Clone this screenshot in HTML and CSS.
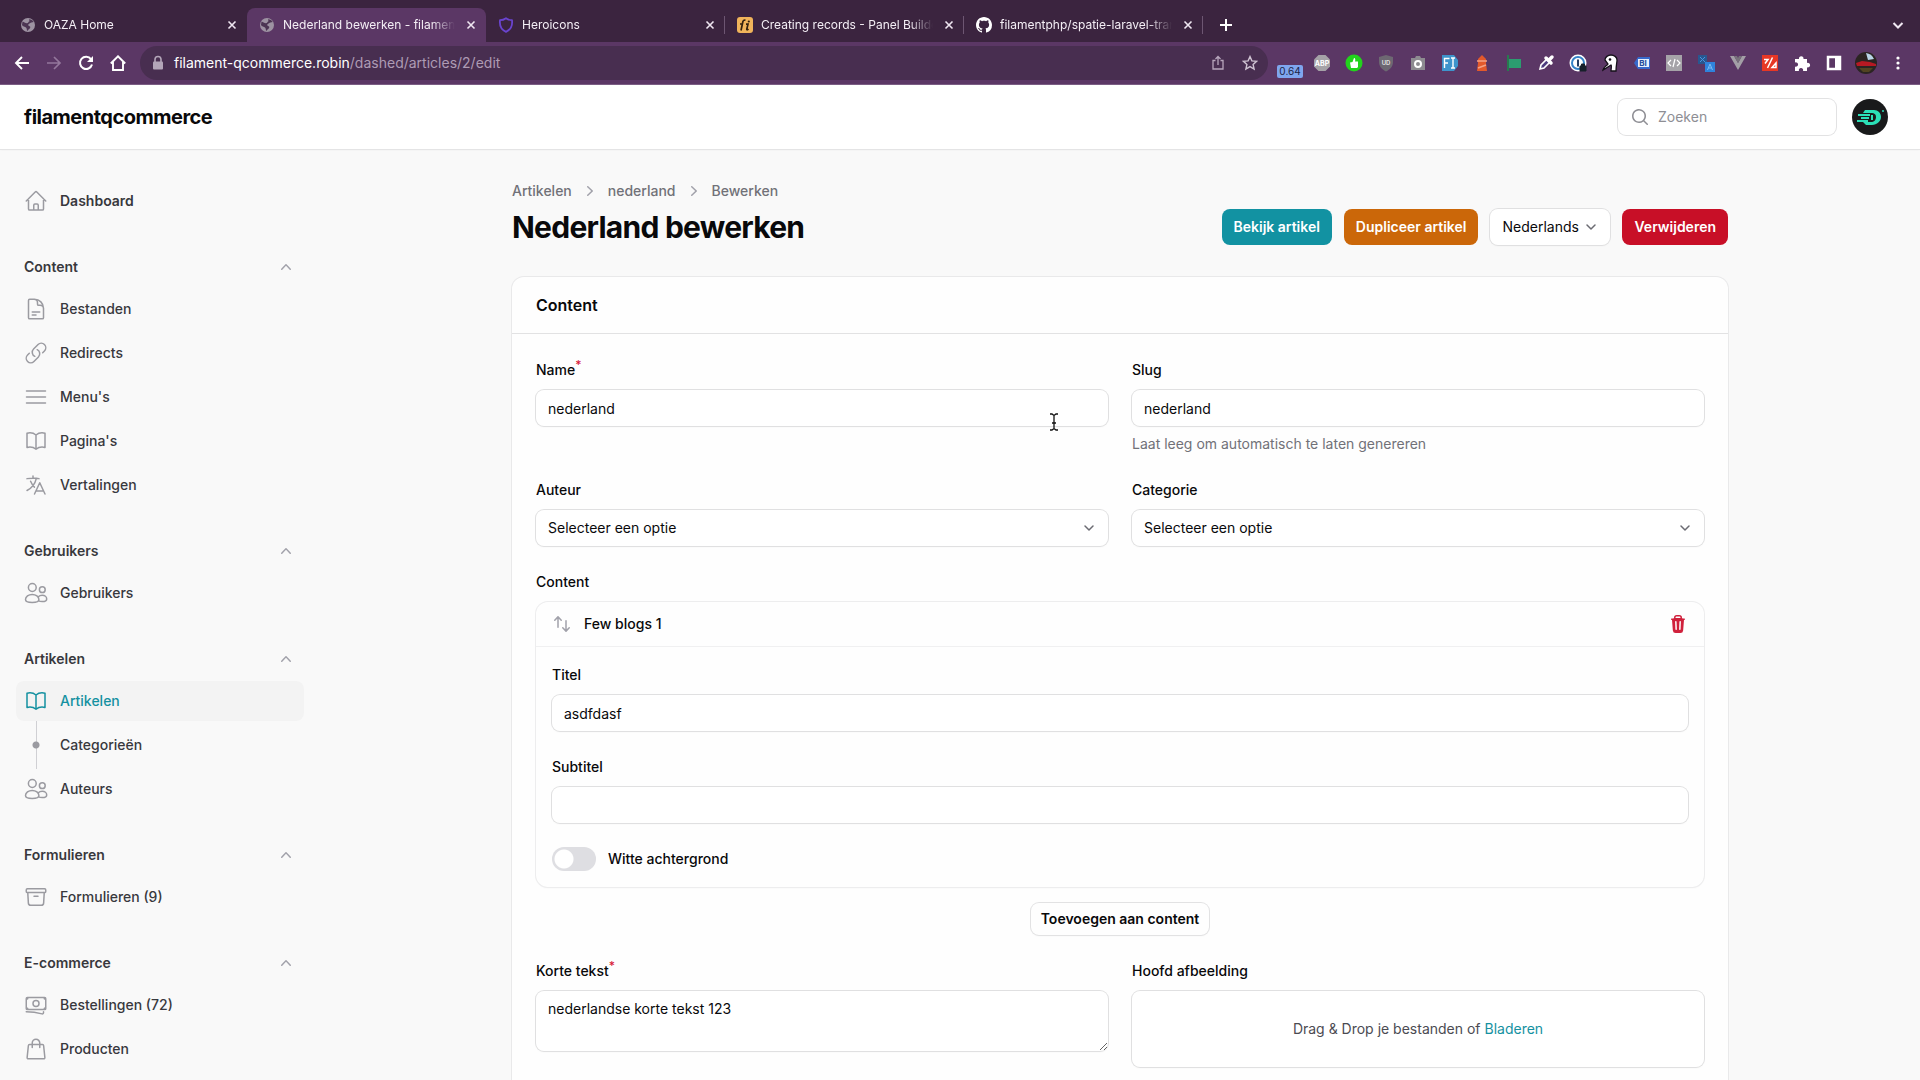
FILE: index.html
```html
<!DOCTYPE html>
<html lang="nl">
<head>
	<meta charset="UTF-8">
	<meta name="viewport" content="width=device-width, initial-scale=1">
	<title>Nederland bewerken - filamentqcommerce</title>
	<link rel="stylesheet" href="styles.css">
</head>
<body>
	<!-- icons used more than once -->
	<svg class="defs" aria-hidden="true">
		<symbol id="i-globe" viewBox="0 0 16 16"><circle cx="8" cy="8" r="7" fill="#9d92a2"/><path d="M2.5 4.5C4 5 5 6 7 6.2c1.500 0 1-1.600 2.500-2L9 2.200c2 0 3.800 1 4.700 2.800-1 .5-2 0-3 .8-1 1-2.500 1-2.500 2.200 0 1 1.500.8 2 1.800.4 1-.6 2-1.700 2.800L7.500 14C6.500 13 7 11.500 6 10.500S2.800 9.500 2 8z" fill="#4c3553"/></symbol>
		<symbol id="i-close" viewBox="0 0 16 16"><path d="M4.500 4.500l7 7m0-7l-7 7" stroke="#efe6f1" stroke-width="1.600" fill="none"/></symbol>
		<symbol id="i-up" viewBox="0 0 20 20"><path fill="currentColor" d="M14.77 12.79a.75.75 0 01-1.06-.02L10 8.832 6.29 12.77a.75.75 0 11-1.08-1.040l4.250-4.500a.75.75 0 011.080 0l4.250 4.500a.75.75 0 01-.02 1.060z"/></symbol>
		<symbol id="i-right" viewBox="0 0 20 20"><path fill="currentColor" d="M7.210 14.770a.75.75 0 01.02-1.060L11.168 10 7.230 6.290a.75.75 0 111.040-1.080l4.500 4.250a.75.75 0 010 1.080l-4.500 4.250a.75.75 0 01-1.060-.02z"/></symbol>
		<symbol id="i-down" viewBox="0 0 20 20"><path d="M6 8l4 4 4-4" fill="none" stroke="currentColor" stroke-width="1.500" stroke-linecap="round" stroke-linejoin="round"/></symbol>
		<symbol id="i-book" viewBox="0 0 24 24"><path d="M12 6.042A8.967 8.967 0 006 3.75c-1.052 0-2.062.18-3 .512v14.25A8.987 8.987 0 016 18c2.305 0 4.408.867 6 2.292m0-14.25a8.966 8.966 0 016-2.292c1.052 0 2.062.18 3 .512v14.25A8.987 8.987 0 0018 18a8.967 8.967 0 00-6 2.292m0-14.25v14.25"/></symbol>
		<symbol id="i-users" viewBox="0 0 24 24"><circle cx="8.300" cy="6.500" r="3.900"/><circle cx="18.300" cy="8.700" r="2.900"/><path d="M1.500 18.500a6.600 5 0 0113.400 0c0 2-2.800 3-6.700 3s-6.700-1-6.700-3zM14.300 15.800c1-1 2.300-1.500 3.900-1.500 2.600 0 4.500 1.700 4.500 3.600s-1.900 2.600-4.500 2.600c-1.400 0-2.700-.2-3.600-.7"/></symbol>
	</svg>

	<div class="window">
		<div class="tabs">
			<div class="tab"><svg class="i16"><use href="#i-globe"/></svg><span>OAZA Home</span><button aria-label="Sluiten"><svg class="i16"><use href="#i-close"/></svg></button></div>
			<div class="tab tab-active"><svg class="i16"><use href="#i-globe"/></svg><span>Nederland bewerken - filamentqcommerce</span><button aria-label="Sluiten"><svg class="i16"><use href="#i-close"/></svg></button></div>
			<div class="tab tab-line"><svg class="i16" viewBox="0 0 16 16"><path d="M8 1.200c2 1.500 4 2 6 2 .6 5-1 9.500-6 11.600-5-2.100-6.600-6.600-6-11.600 2 0 4-.5 6-2z" fill="none" stroke="#6a44cf" stroke-width="1.800" stroke-linejoin="round"/></svg><span>Heroicons</span><button aria-label="Sluiten"><svg class="i16"><use href="#i-close"/></svg></button></div>
			<div class="tab tab-line"><svg class="i16" viewBox="0 0 16 16"><rect width="16" height="16" rx="3" fill="#f0b45b"/><path d="M3 7h3M4 13.500L5.800 5C6 3.500 7 2.800 8.500 3.200M9 7.200h2L9.800 12c-.2 1 .8 1 1.700.2" fill="none" stroke="#33220f" stroke-width="1.700"/><circle cx="11.800" cy="4.500" r="1.100" fill="#33220f"/></svg><span>Creating records - Panel Builder - Filament</span><button aria-label="Sluiten"><svg class="i16"><use href="#i-close"/></svg></button></div>
			<div class="tab tab-line"><svg class="i16" viewBox="0 0 16 16"><path fill="#fff" d="M8 0C3.580 0 0 3.580 0 8c0 3.540 2.290 6.530 5.470 7.590.4.070.55-.17.55-.38 0-.19-.01-.82-.01-1.490-2.010.37-2.530-.49-2.690-.94-.09-.23-.48-.94-.82-1.130-.28-.15-.68-.52-.01-.53.63-.01 1.080.58 1.230.82.72 1.210 1.870.87 2.330.66.07-.52.28-.87.51-1.070-1.780-.2-3.640-.89-3.640-3.950 0-.87.31-1.590.82-2.150-.08-.2-.36-1.020.08-2.120 0 0 .67-.21 2.200.82.64-.18 1.320-.27 2-.27s1.360.09 2 .27c1.530-1.040 2.200-.82 2.200-.82.44 1.100.16 1.920.08 2.120.51.56.82 1.270.82 2.150 0 3.070-1.870 3.750-3.650 3.950.29.25.54.73.54 1.480 0 1.070-.01 1.930-.01 2.200 0 .21.15.46.55.38A8.010 8.010 0 0016 8c0-4.420-3.580-8-8-8z"/></svg><span>filamentphp/spatie-laravel-translatable-plugin</span><button aria-label="Sluiten"><svg class="i16"><use href="#i-close"/></svg></button></div>
			<button class="tab-new" aria-label="Nieuw tabblad"><svg class="i16" viewBox="0 0 16 16"><path d="M8 2v12M2 8h12" stroke="#fff" stroke-width="2"/></svg></button>
			<button class="tab-list" aria-label="Tabbladen zoeken"><svg class="i16" viewBox="0 0 16 16"><path d="M3.500 6L8 10.500 12.500 6" fill="none" stroke="#f0e8f2" stroke-width="2"/></svg></button>
		</div>

		<div class="toolbar">
			<button class="tool" aria-label="Terug"><svg class="i16" viewBox="0 0 16 16"><path d="M15 8H2M8 2L2 8l6 6" fill="none" stroke="#fff" stroke-width="1.900"/></svg></button>
			<button class="tool" aria-label="Vooruit"><svg class="i16" viewBox="0 0 16 16"><path d="M1 8h13M8 2l6 6-6 6" fill="none" stroke="#94779c" stroke-width="1.700"/></svg></button>
			<button class="tool" aria-label="Vernieuwen"><svg class="i16" viewBox="0 0 16 16"><path d="M13 4.200A6.100 6.100 0 1014 9.500" fill="none" stroke="#fff" stroke-width="2"/><path d="M15 1v6H9z" fill="#fff"/></svg></button>
			<button class="tool" aria-label="Startpagina"><svg class="i16" viewBox="0 0 16 16"><path d="M.8 8.500L8 1.300l7.200 7.200M3 7v8h10V7" fill="none" stroke="#fff" stroke-width="1.900"/></svg></button>
			<div class="omnibox">
				<svg class="i16" viewBox="0 0 16 16"><rect x="3" y="6.500" width="10" height="8" rx="1" fill="#b3a5b8"/><path d="M5 7V4.500a3 3 0 016 0V7" fill="none" stroke="#b3a5b8" stroke-width="1.600"/></svg>
				<p class="url">filament-qcommerce.robin<span>/dashed/articles/2/edit</span></p>
				<button class="tool" aria-label="Delen"><svg class="i16" viewBox="0 0 16 16"><path d="M5.500 5.500h-2.500V14h10V5.500h-2.500M8 10V1.500M5.500 4L8 1.500 10.500 4" fill="none" stroke="#b7a6bc" stroke-width="1.300"/></svg></button>
				<button class="tool" aria-label="Bladwijzer"><svg class="i16" viewBox="0 0 16 16"><path d="M8 1.600l1.900 4.300 4.700.4-3.500 3.100 1 4.600L8 11.600 3.900 14l1-4.600-3.500-3.100 4.700-.4z" fill="none" stroke="#cfc3d2" stroke-width="1.400"/></svg></button>
			</div>
			<div class="extensions">
				<span class="tool"><b class="badge">0.64</b></span>
				<span class="tool"><svg class="i18" viewBox="0 0 18 18"><path d="M5.500 1h7L17 5.500v7L12.500 17h-7L1 12.500v-7z" fill="#a5a2a7"/><text x="9" y="11.500" font-size="7" fill="#fff">ABP</text></svg></span>
				<span class="tool"><svg class="i18" viewBox="0 0 18 18"><circle cx="9" cy="9" r="8.500" fill="#22d31c"/><path d="M5 8.500l2.500-.5 1.500-4c1.500 0 1.500 2 1 3.500h3V13l-1 1H6z" fill="#fff"/></svg></span>
				<span class="tool"><svg class="i18" viewBox="0 0 18 18"><path d="M9 1l7 2v5c0 4.500-3 7.500-7 9.500C5 15.500 2 12.500 2 8V3z" fill="#6d6872"/><text x="9" y="11" font-size="6" fill="#ddd">UD</text></svg></span>
				<span class="tool"><svg class="i18" viewBox="0 0 18 18"><path d="M2 4h4l1-2h4l1 2h4v12H2z" fill="#8d8b90"/><circle cx="9" cy="10" r="3" fill="none" stroke="#fff" stroke-width="2"/></svg></span>
				<span class="tool"><svg class="i18" viewBox="0 0 18 18"><path d="M1 1h12l4 5v6l-4 5H1z" fill="#3e94cc"/><path d="M3.500 14V4.500h5M3.500 9H7M10 4h4M12 4v10M10 14h4" fill="none" stroke="#fff" stroke-width="1.400"/></svg></span>
				<span class="tool"><svg class="i18" viewBox="0 0 18 18"><path d="M5 5l4-4 4 4v4l1 8H4l1-8z" fill="#e3592b"/><path d="M4 7h10M5 14l8-3" stroke="#f5a184" stroke-width="1.500"/></svg></span>
				<span class="tool"><svg class="i18" viewBox="0 0 18 18"><path d="M3 1v16" stroke="#28794f" stroke-width="2"/><path d="M4 5h12v9H4z" fill="#2b9d70"/></svg></span>
				<span class="tool"><svg class="i18" viewBox="0 0 18 18"><path d="M3 15l1-4 6-6 3 3-6 6z" fill="#4f3e80" stroke="#fff" stroke-width="1.600"/><path d="M9 4l5 5M12 6l3-3" stroke="#fff" stroke-width="3.500" stroke-linecap="round"/></svg></span>
				<span class="tool"><svg class="i18" viewBox="0 0 18 18"><circle cx="9" cy="9" r="8.500" fill="#fff"/><circle cx="9" cy="9" r="6" fill="#fff" stroke="#3583c7" stroke-width="2"/><path d="M8 5.500h2v7H8z" fill="#243e63"/><path d="M11 12h6v5h-6zM12.500 12v-2h3v2" fill="#17202b" stroke="#17202b"/></svg></span>
				<span class="tool"><svg class="i18" viewBox="0 0 18 18"><path d="M4 6c0-3 3-5 6-5s6 2 6 5-1 5-1 11h-5c0-3 1-5 0-6l-8 5c1-4 4-4 5-6z" fill="#fff" stroke="#151019" stroke-width="1.300"/><circle cx="9" cy="5.500" r="1.300" fill="#151019"/></svg></span>
				<span class="tool"><svg class="i18" viewBox="0 0 18 18"><path d="M1 9l4-6h12v12H5z" fill="#3769ca"/><path d="M5 5h11v8H5z" fill="#e6effb"/><text x="10" y="12" font-size="8" fill="#244d9b">BI</text></svg></span>
				<span class="tool"><svg class="i18" viewBox="0 0 18 18"><path d="M1 1h16v16H1z" fill="#a5a3a8"/><path d="M6 6L3 9l3 3m6-6l3 3-3 3M10 5l-2 8" fill="none" stroke="#fff" stroke-width="1.200"/></svg></span>
				<span class="tool"><svg class="i18" viewBox="0 0 18 18"><path d="M1 1h9v9H1z" fill="#285790"/><path d="M8 8h10v10H8z" fill="#2f83dc"/><path d="M3 3l5 5m0-5L3 8" stroke="#4796e0"/><path d="M10.500 16l2.500-6 2.500 6m-4-2h3" fill="none" stroke="#7dbcf5"/></svg></span>
				<span class="tool"><svg class="i18" viewBox="0 0 18 18"><path d="M1 2h4l4 7 4-7h4L9 16z" fill="#a39fa6"/><path d="M5 2h3l1 2 1-2h3L9 9z" fill="#77717b"/></svg></span>
				<span class="tool"><svg class="i18" viewBox="0 0 18 18"><path d="M1 1h16v16H1z" fill="#e73725"/><path d="M3 5.500h4L4 9.500m7.500-6L6.500 14M11 13.500h4V9z" fill="none" stroke="#fff" stroke-width="1.500"/></svg></span>
				<span class="tool"><svg class="i18" viewBox="0 0 18 18"><path d="M2 5h4a2.300 2.300 0 114.500 0H14v4a2.300 2.300 0 110 4.300V17h-4a2.200 2.200 0 10-4 0H2v-4.500a2.200 2.200 0 100-4z" fill="#fff"/></svg></span>
				<span class="tool"><svg class="i18" viewBox="0 0 18 18"><path d="M3 3h12v12H3z" fill="none" stroke="#fff" stroke-width="2.500"/><path d="M10 3h4v12h-4z" fill="#fff"/></svg></span>
				<span class="tool"><svg class="i22" viewBox="0 0 22 22"><circle cx="11" cy="11" r="11" fill="#2b2422"/><path d="M11 1a10 10 0 018 6l-6 1z" fill="#b9d4e6"/><path d="M1 11l6-2 8 1 6 2v2H2z" fill="#b51923"/><path d="M4 16h14l-4 4H8z" fill="#514421"/></svg></span>
				<span class="tool"><svg class="i18" viewBox="0 0 18 18"><circle cx="9" cy="4" r="1.600" fill="#fff"/><circle cx="9" cy="9" r="1.600" fill="#fff"/><circle cx="9" cy="14" r="1.600" fill="#fff"/></svg></span>
			</div>
		</div>

		<div class="page">
			<header class="topbar">
				<a class="brand" href="#">filamentqcommerce</a>
				<label class="search">
					<svg class="i20" viewBox="0 0 20 20"><path fill="currentColor" d="M9 3.500a5.500 5.500 0 100 11 5.500 5.500 0 000-11zM2 9a7 7 0 1112.452 4.391l3.328 3.329a.75.75 0 11-1.060 1.060l-3.329-3.328A7 7 0 012 9z"/></svg>
					<input type="search" placeholder="Zoeken" aria-label="Zoeken">
				</label>
				<button class="avatar" aria-label="Gebruikersmenu"><svg viewBox="0 0 36 36"><circle cx="18" cy="18" r="18" fill="#191a1b"/><path d="M13 11h9c4 0 7 3 7 7s-4 8-9 8h-6l-3-3h8c3 0 5-2 5-5s-2-4-4-4H11z" fill="#2be0b7"/><path d="M6 16h12M9 19h8M5 22h11M20 16v5" stroke="#2be0b7" stroke-width="2"/><circle cx="31" cy="12" r="1" fill="#2be0b7"/></svg></button>
			</header>

			<div class="layout">
				<nav class="sidebar">
					<ul class="group">
						<li><a class="item item-home" href="#"><svg class="nav-icon" viewBox="0 0 24 24"><path d="M2.250 12l8.954-8.955c.44-.439 1.152-.439 1.591 0L21.750 12M4.500 9.750v10.125c0 .621.504 1.125 1.125 1.125H9.750v-4.875c0-.621.504-1.125 1.125-1.125h2.250c.621 0 1.125.504 1.125 1.125V21h4.125c.621 0 1.125-.504 1.125-1.125V9.750M8.250 21h8.250"/></svg>Dashboard</a></li>
					</ul>
					<div>
						<button class="group-label">Content<svg class="i20"><use href="#i-up"/></svg></button>
						<ul class="group">
							<li><a class="item" href="#"><svg class="nav-icon" viewBox="0 0 24 24"><path d="M19.500 14.250v-2.625a3.375 3.375 0 00-3.375-3.375h-1.500A1.125 1.125 0 0113.500 7.125v-1.500a3.375 3.375 0 00-3.375-3.375H8.250m0 12.750h7.500m-7.500 3H12M10.500 2.250H5.625c-.621 0-1.125.504-1.125 1.125v17.250c0 .621.504 1.125 1.125 1.125h12.750c.621 0 1.125-.504 1.125-1.125V11.250a9 9 0 00-9-9z"/></svg>Bestanden</a></li>
							<li><a class="item" href="#"><svg class="nav-icon" viewBox="0 0 24 24"><path d="M13.190 8.688a4.500 4.500 0 011.242 7.244l-4.500 4.500a4.500 4.500 0 01-6.364-6.364l1.757-1.757m13.350-.622l1.757-1.757a4.500 4.500 0 00-6.364-6.364l-4.500 4.500a4.500 4.500 0 001.242 7.244"/></svg>Redirects</a></li>
							<li><a class="item" href="#"><svg class="nav-icon" viewBox="0 0 24 24"><path d="M2.500 6h19M2.500 12h19M2.500 18h19"/></svg>Menu's</a></li>
							<li><a class="item" href="#"><svg class="nav-icon"><use href="#i-book"/></svg>Pagina's</a></li>
							<li><a class="item" href="#"><svg class="nav-icon" viewBox="0 0 24 24"><path d="M10.500 21l5.250-11.250L21 21m-9-3h7.500M3 5.621a48.474 48.474 0 016-.371m0 0c1.120 0 2.233.038 3.334.114M9 5.250V3m3.334 2.364C11.176 10.658 7.690 15.080 3 17.502m9.334-12.138c.896.061 1.785.147 2.666.257m-4.589 8.495a18.023 18.023 0 01-3.827-5.802"/></svg>Vertalingen</a></li>
						</ul>
					</div>
					<div>
						<button class="group-label">Gebruikers<svg class="i20"><use href="#i-up"/></svg></button>
						<ul class="group">
							<li><a class="item" href="#"><svg class="nav-icon"><use href="#i-users"/></svg>Gebruikers</a></li>
						</ul>
					</div>
					<div>
						<button class="group-label">Artikelen<svg class="i20"><use href="#i-up"/></svg></button>
						<ul class="group">
							<li><a class="item item-active" href="#"><svg class="nav-icon"><use href="#i-book"/></svg>Artikelen</a></li>
							<li><a class="item" href="#"><span class="branch"></span>Categorieën</a></li>
							<li><a class="item" href="#"><svg class="nav-icon"><use href="#i-users"/></svg>Auteurs</a></li>
						</ul>
					</div>
					<div>
						<button class="group-label">Formulieren<svg class="i20"><use href="#i-up"/></svg></button>
						<ul class="group">
							<li><a class="item" href="#"><svg class="nav-icon" viewBox="0 0 24 24"><path d="M20.250 7.500l-.625 10.632a2.250 2.250 0 01-2.247 2.118H6.622a2.250 2.250 0 01-2.247-2.118L3.750 7.500M10 11.250h4M3.375 7.500h17.250c.621 0 1.125-.504 1.125-1.125v-1.500c0-.621-.504-1.125-1.125-1.125H3.375c-.621 0-1.125.504-1.125 1.125v1.500c0 .621.504 1.125 1.125 1.125z"/></svg>Formulieren (9)</a></li>
						</ul>
					</div>
					<div>
						<button class="group-label">E-commerce<svg class="i20"><use href="#i-up"/></svg></button>
						<ul class="group">
							<li><a class="item" href="#"><svg class="nav-icon" viewBox="0 0 24 24"><path d="M2.250 18.750a60.070 60.070 0 0115.797 2.101c.727.198 1.453-.342 1.453-1.096V18.750M3.375 4.500h17.250c.621 0 1.125.504 1.125 1.125v9.750c0 .621-.504 1.125-1.125 1.125H3.375a1.125 1.125 0 01-1.125-1.125v-9.750c0-.621.504-1.125 1.125-1.125zM2.250 6H3a.75.75 0 00.75-.75V4.500m16.500 0v.75c0 .414.336.75.75.75h.75m0 9H21a.75.75 0 00-.75.75v.75m-16.500 0v-.75A.75.75 0 003 15h-.75M15 10.500a3 3 0 11-6 0 3 3 0 016 0z"/></svg>Bestellingen (72)</a></li>
							<li><a class="item" href="#"><svg class="nav-icon" viewBox="0 0 24 24"><path d="M15.750 10.500V6a3.750 3.750 0 10-7.500 0v4.500m11.356-1.993l1.263 12c.07.665-.45 1.243-1.119 1.243H4.250a1.125 1.125 0 01-1.120-1.243l1.264-12A1.125 1.125 0 015.513 7.500h12.974c.576 0 1.059.435 1.119 1.007z"/></svg>Producten</a></li>
						</ul>
					</div>
				</nav>

				<main class="main">
					<div class="heading">
						<div>
							<nav class="breadcrumbs"><a href="#">Artikelen</a><svg class="i20"><use href="#i-right"/></svg><a href="#">nederland</a><svg class="i20"><use href="#i-right"/></svg><a href="#">Bewerken</a></nav>
							<h1>Nederland bewerken</h1>
						</div>
						<div class="actions">
							<button class="btn btn-primary">Bekijk artikel</button>
							<button class="btn btn-warning">Dupliceer artikel</button>
							<span class="select select-small"><select aria-label="Taal"><option>Nederlands</option></select><svg class="i20"><use href="#i-down"/></svg></span>
							<button class="btn btn-danger">Verwijderen</button>
						</div>
					</div>

					<section class="card">
						<h2>Content</h2>
						<form class="fields">
							<div class="field">
								<label for="name">Name<sup>*</sup></label>
								<input class="control" type="text" id="name" value="nederland">
							</div>
							<div class="field">
								<label for="slug">Slug</label>
								<input class="control" type="text" id="slug" value="nederland">
								<p class="hint">Laat leeg om automatisch te laten genereren</p>
							</div>
							<div class="field">
								<label for="author">Auteur</label>
								<span class="select"><select id="author"><option>Selecteer een optie</option></select><svg class="i20"><use href="#i-down"/></svg></span>
							</div>
							<div class="field">
								<label for="category">Categorie</label>
								<span class="select"><select id="category"><option>Selecteer een optie</option></select><svg class="i20"><use href="#i-down"/></svg></span>
							</div>
							<div class="field wide">
								<span class="label">Content</span>
								<div class="block">
									<div class="block-head">
										<svg class="i20 sort" viewBox="0 0 20 20"><path fill="currentColor" d="M2.240 6.800a.75.75 0 001.060-.04l1.950-2.100v8.590a.75.75 0 001.500 0V4.660l1.950 2.100a.75.75 0 101.100-1.020l-3.250-3.500a.75.75 0 00-1.100 0L2.200 5.740a.75.75 0 00.04 1.060zm8 6.400a.75.75 0 00-.04 1.060l3.250 3.500a.75.75 0 001.100 0l3.250-3.500a.75.75 0 10-1.100-1.020l-1.950 2.100V6.750a.75.75 0 00-1.500 0v8.590l-1.950-2.100a.75.75 0 00-1.060-.04z"/></svg>
										<h3>Few blogs 1</h3>
										<button type="button" class="trash" aria-label="Verwijderen"><svg class="i20" viewBox="0 0 20 20"><path fill="currentColor" fill-rule="evenodd" d="M8.750 1A2.750 2.750 0 006 3.750v.443c-.795.077-1.584.176-2.365.298a.75.75 0 10.23 1.482l.149-.022.841 10.518A2.750 2.750 0 007.596 19h4.807a2.750 2.750 0 002.742-2.530l.841-10.520.149.023a.75.75 0 00.23-1.482A41.030 41.030 0 0014 4.193V3.750A2.750 2.750 0 0011.250 1h-2.500zM10 4c.84 0 1.673.025 2.500.075V3.750c0-.69-.56-1.250-1.250-1.250h-2.500c-.69 0-1.250.56-1.250 1.250v.325C8.327 4.025 9.160 4 10 4zM8.580 7.720a.75.75 0 00-1.500.06l.3 7.500a.75.75 0 101.500-.06l-.3-7.500zm4.340.06a.75.75 0 10-1.500-.06l-.3 7.500a.75.75 0 101.500.06l.3-7.500z"/></svg></button>
									</div>
									<div class="block-body">
										<div class="field">
											<label for="title">Titel</label>
											<input class="control" type="text" id="title" value="asdfdasf">
										</div>
										<div class="field">
											<label for="subtitle">Subtitel</label>
											<input class="control" type="text" id="subtitle">
										</div>
										<label class="toggle"><input type="checkbox">Witte achtergrond</label>
									</div>
								</div>
								<button type="button" class="btn btn-add">Toevoegen aan content</button>
							</div>
							<div class="field">
								<label for="excerpt">Korte tekst<sup>*</sup></label>
								<textarea class="control" id="excerpt">nederlandse korte tekst 123</textarea>
							</div>
							<div class="field">
								<span class="label">Hoofd afbeelding</span>
								<div class="dropzone">Drag &amp; Drop je bestanden of&nbsp;<a href="#">Bladeren</a></div>
							</div>
						</form>
					</section>
				</main>
			</div>
		</div>
		<svg class="cursor" viewBox="0 0 10 18"><path d="M1 1h2l2 1.500L7 1h2M1 17h2l2-1.500L7 17h2M5 2v14M3 10h4" fill="none" stroke="#111" stroke-width="1.300"/></svg>
	</div>
</body>
</html>
```
FILE: styles.css
```css
*{
	box-sizing: border-box;
}
body,h1,h2,h3,p,ul{
	margin: 0;
	padding: 0;
}
body{
	font-family: Inter, "Liberation Sans", sans-serif;
	font-size: 14px;
	line-height: 20px;
	color: #09090b;
	background-color: #f9f9f9;
}
button,input,select,textarea{
	font: inherit;
	color: inherit;
}
button{
	padding: 0;
	border: 0;
	background: none;
}
a{
	color: inherit;
	text-decoration: none;
}
ul{
	list-style: none;
}
svg{
	display: block;
	flex: none;
}
.defs{
	position: absolute;
	width: 0;
	height: 0;
}
.i16{
	width: 16px;
	height: 16px;
}
.i18{
	width: 18px;
	height: 18px;
}
.i20{
	width: 20px;
	height: 20px;
}
.i22{
	width: 22px;
	height: 22px;
}
.window{
	position: relative;
	display: flex;
	flex-direction: column;
	height: 100vh;
	overflow: hidden;
}

/* browser */
.tabs{
	display: flex;
	height: 42px;
	flex: none;
	padding: 8px 14px 0 8px;
	background-color: #3b243f;
	color: #f4eef5;
	font-size: 12px;
}
.tab{
	display: flex;
	align-items: center;
	flex: 0 1 239px;
	min-width: 0;
	gap: 8px;
	padding: 0 7px 0 12px;
	position: relative;
}
.tab span{
	flex: 1;
	overflow: hidden;
	white-space: nowrap;
	-webkit-mask-image: linear-gradient(to left, transparent, #000 24px);
	mask-image: linear-gradient(to left, transparent, #000 24px);
}
.tab-active{
	background-color: #5b3765;
	border-radius: 8px 8px 0 0;
}
.tab-line::after{
	content: "";
	position: absolute;
	right: 0;
	top: 8px;
	height: 18px;
	border-right: 1px solid #6d5672;
}
.tab-new{
	padding: 0 15px;
}
.tab-list{
	margin-left: auto;
}
.toolbar{
	display: flex;
	align-items: center;
	flex: none;
	height: 43px;
	padding: 0 6px;
	background-color: #5b3765;
	border-bottom: 1px solid #7b5d84;
}
.tool{
	display: flex;
	flex: none;
	align-items: center;
	justify-content: center;
	width: 32px;
	height: 34px;
}
.omnibox{
	display: flex;
	align-items: center;
	flex: 1;
	height: 34px;
	margin: 0 6px;
	padding: 0 2px 0 10px;
	border-radius: 17px;
	background-color: #482e50;
}
.url{
	flex: 1;
	margin-left: 8px;
	color: #fff;
}
.url span{
	color: #ae9bb4;
}
.extensions{
	display: flex;
}
.extensions text{
	font-weight: 700;
	text-anchor: middle;
}
.badge{
	align-self: flex-end;
	margin-bottom: 2px;
	padding: 0 2px;
	border-radius: 2px;
	background-color: #7fa6ee;
	color: #1c2547;
	font-size: 10px;
	font-weight: 400;
	line-height: 13px;
}

/* top bar */
.page{
	flex: 1;
	min-height: 0;
}
.topbar{
	display: flex;
	align-items: center;
	gap: 16px;
	height: 64px;
	padding: 0 32px 0 24px;
	background-color: #fff;
	box-shadow: 0 1px 0 #e4e4e5, 0 1px 2px rgba(0,0,0,.05);
}
.brand{
	font-size: 20px;
	font-weight: 700;
	letter-spacing: -0.025em;
	margin-right: auto;
}
.search{
	display: flex;
	align-items: center;
	gap: 8px;
	width: 218px;
	height: 36px;
	padding: 0 12px;
	border-radius: 8px;
	box-shadow: 0 0 0 1px #e2e2e3;
	color: #8e8e94;
}
.search input{
	width: 100%;
	border: 0;
	padding: 0;
	outline: none;
	background: none;
}
.search input::placeholder{
	color: #8e8e94;
}
.avatar{
	width: 36px;
	height: 36px;
}

/* sidebar */
.layout{
	display: flex;
}
.sidebar{
	display: flex;
	flex-direction: column;
	gap: 28px;
	flex: none;
	width: 320px;
	padding: 32px 16px;
}
.group{
	display: flex;
	flex-direction: column;
	gap: 4px;
}
.group-label{
	display: flex;
	align-items: center;
	justify-content: space-between;
	width: 100%;
	height: 36px;
	margin-bottom: 4px;
	padding: 0 8px;
	font-weight: 600;
	color: #38383d;
}
.group-label svg{
	color: #a1a1aa;
}
.item{
	display: flex;
	align-items: center;
	gap: 12px;
	height: 40px;
	padding: 0 8px;
	border-radius: 8px;
	font-weight: 500;
	color: #38383d;
}
.item-home{
	font-weight: 600;
}
.nav-icon{
	width: 24px;
	height: 24px;
	fill: none;
	stroke: #9b9ba1;
	stroke-width: 1.5;
	stroke-linecap: round;
	stroke-linejoin: round;
}
.item-active{
	background-color: #f3f3f3;
	color: #1591a1;
}
.item-active .nav-icon{
	stroke: #1591a1;
}
.branch{
	width: 24px;
	height: 48px;
	background: radial-gradient(circle, #9b9ba1 3px, transparent 4px), linear-gradient(#d0d0d4, #d0d0d4) center / 1px 100% no-repeat;
}

/* content */
.main{
	flex: 1;
	max-width: 1280px;
	margin: 0 auto;
	padding: 32px;
}
.heading{
	display: flex;
	align-items: flex-end;
	justify-content: space-between;
	margin-bottom: 32px;
}
.breadcrumbs{
	display: flex;
	gap: 8px;
	margin-bottom: 8px;
	font-weight: 500;
	color: #717178;
}
.breadcrumbs svg{
	color: #a1a1aa;
}
h1{
	font-size: 30px;
	line-height: 36px;
	font-weight: 700;
	letter-spacing: -0.025em;
}
.actions{
	display: flex;
	gap: 12px;
}
.btn{
	height: 36px;
	padding: 0 12px;
	border-radius: 8px;
	font-weight: 600;
	color: #fff;
}
.btn-primary{
	background-color: #1292a2;
}
.btn-warning{
	background-color: #cb6709;
}
.btn-danger{
	background-color: #c80f27;
}
.btn-add{
	align-self: center;
	height: 32px;
	margin-top: 8px;
	padding: 0 10px;
	color: #09090b;
	box-shadow: 0 0 0 1px #e2e2e3, 0 1px 2px rgba(0,0,0,.05);
}
.card{
	border-radius: 12px;
	background-color: #fefefe;
	box-shadow: 0 0 0 1px #e9e9ea, 0 1px 2px rgba(0,0,0,.05);
}
h2{
	padding: 16px 24px;
	border-bottom: 1px solid #e2e2e3;
	font-size: 16px;
	line-height: 24px;
	font-weight: 600;
}
.fields{
	display: grid;
	grid-template-columns: 1fr 1fr;
	gap: 24px;
	padding: 24px;
}
.field{
	display: flex;
	flex-direction: column;
	gap: 8px;
	min-width: 0;
}
.wide{
	grid-column: 1 / -1;
}
.field > label,.label{
	line-height: 24px;
	font-weight: 500;
}
sup{
	color: #d81b3a;
	font-size: 12px;
	line-height: 0;
}
.control,.select select,.dropzone{
	width: 100%;
	border: 0;
	border-radius: 8px;
	background-color: #fff;
	box-shadow: 0 0 0 1px #e0e0e1, 0 1px 2px rgba(0,0,0,.05);
	outline: none;
}
.control{
	height: 36px;
	padding: 6px 12px;
	line-height: 24px;
}
textarea.control{
	display: block;
	height: 60px;
}
.hint{
	color: #717178;
}
.select{
	position: relative;
	display: flex;
}
.select select{
	appearance: none;
	height: 36px;
	padding: 0 36px 0 12px;
}
.select svg{
	position: absolute;
	right: 9px;
	top: 8px;
	color: #6b6b72;
	pointer-events: none;
}
.select-small select{
	padding-right: 31px;
}
.block{
	border-radius: 12px;
	box-shadow: 0 0 0 1px #ededee, 0 1px 2px rgba(0,0,0,.05);
}
.block-head{
	display: flex;
	align-items: center;
	gap: 12px;
	height: 45px;
	padding: 0 16px;
	border-bottom: 1px solid #f0f0f1;
}
h3{
	flex: 1;
	font-size: 14px;
	font-weight: 500;
}
.sort{
	color: #a1a1aa;
}
.trash{
	color: #d0213c;
}
.block-body{
	display: flex;
	flex-direction: column;
	gap: 24px;
	padding: 16px;
}
.toggle{
	display: flex;
	align-items: center;
	align-self: flex-start;
	gap: 12px;
	font-weight: 500;
}
.toggle input{
	appearance: none;
	width: 44px;
	height: 24px;
	margin: 0;
	border-radius: 12px;
	background: radial-gradient(circle at 12px 12px, #fff 9px, transparent 10px) #dedee2;
}
.toggle input:checked{
	background: radial-gradient(circle at 32px 12px, #fff 9px, transparent 10px) #1292a2;
}
.dropzone{
	display: flex;
	align-items: center;
	justify-content: center;
	height: 76px;
	color: #4b4b52;
}
.dropzone a{
	color: #1591a1;
}
.cursor{
	position: absolute;
	left: 1049px;
	top: 413px;
	width: 10px;
	height: 18px;
}
```
